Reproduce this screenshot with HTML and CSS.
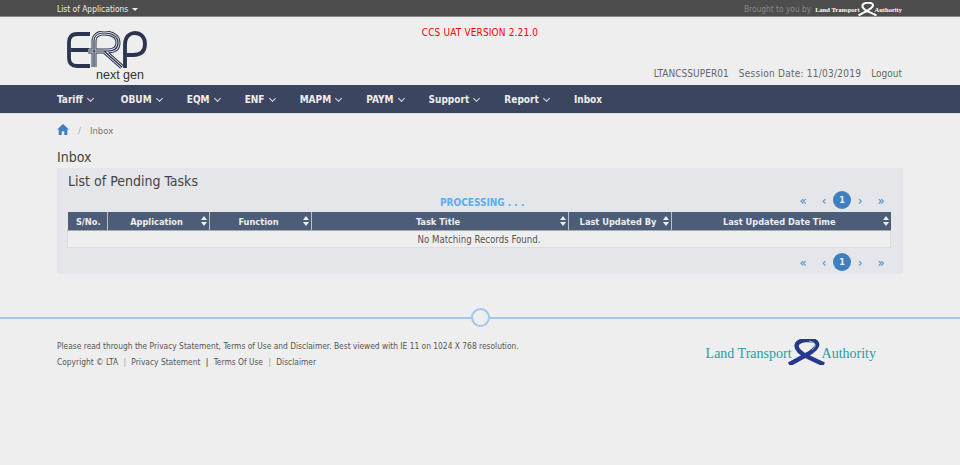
FILE: index.html
```html
<!DOCTYPE html>
<html lang="en">
<head>
    <meta charset="UTF-8">
    <meta name="viewport" content="width=device-width, initial-scale=1.0">
    <title>Inbox</title>
    <link rel="stylesheet" href="styles.css">
</head>
<body>

    <div class="topbar">
        <div class="container topbar-row">
            <a class="app-list">List of Applications <span class="caret"></span></a>
            <div class="brought">
                <span>Brought to you by</span>
                <span class="lta-small">Land Transport</span>
                <svg class="ribbon-small" viewBox="0 0 37 26"><path d="M1 25.5 L20 15 C28 10 31 6 28 3 C25 0 12 0 9 5 C7 10 14 15 20 18 L36 25.5" fill="none" stroke="#fff" stroke-width="4"/></svg>
                <span class="lta-small">Authority</span>
            </div>
        </div>
    </div>

    <header>
        <div class="container header-row">
            <div class="logo">
                <svg viewBox="0 0 80 38" class="logo-mark">
                    <!-- E -->
                    <path d="M23 3 H10 C4 3 2 7 2 11 V27 C2 33 5 35 10 35 H23 M4 19 H22" fill="none" stroke="#2b3550" stroke-width="3.8"/>
                    <!-- R, drawn as a road -->
                    <g fill="none">
                        <path d="M27 36 V10 C27 5 31 2 37 2 C46 2 51 6 51 12 C51 18 46 20 40 20 H21 M37 20 L55 36" stroke="#2b3550" stroke-width="5"/>
                        <path d="M27 36 V10 C27 5 31 2 37 2 C46 2 51 6 51 12 C51 18 46 20 40 20 H21 M37 20 L55 36" stroke="#e8e8e8" stroke-width="3"/>
                        <path d="M27 36 V10 C27 5 31 2 37 2 C46 2 51 6 51 12 C51 18 46 20 40 20 H21 M37 20 L55 36" stroke="#2b3550" stroke-width="1.2"/>
                    </g>
                    <!-- P -->
                    <path d="M58 37 V14 C58 7 61 3 67 2 C74 2 78 6 78 13 C78 20 74 24 66 24 H60" fill="none" stroke="#2b3550" stroke-width="3.8"/>
                </svg>
                <div class="next-gen">next gen</div>
            </div>
            <div class="uat">CCS UAT VERSION 2.21.0</div>
            <div class="session">
                <span class="session-user">LTANCSSUPER01</span>
                <span class="session-date">Session Date: 11/03/2019</span>
                <a>Logout</a>
            </div>
        </div>
    </header>

    <nav>
        <ul class="container">
            <li>Tariff <span class="chev"></span></li>
            <li>OBUM <span class="chev"></span></li>
            <li>EQM <span class="chev"></span></li>
            <li>ENF <span class="chev"></span></li>
            <li>MAPM <span class="chev"></span></li>
            <li>PAYM <span class="chev"></span></li>
            <li>Support <span class="chev"></span></li>
            <li>Report <span class="chev"></span></li>
            <li>Inbox</li>
        </ul>
    </nav>

    <div class="container">
        <div class="crumbs">
            <svg class="home" viewBox="0 0 12 11"><path d="M6 0 L12 5.6 H10.3 V11 H7.3 V7.2 H4.7 V11 H1.7 V5.6 H0 Z" fill="#3f7fbf"/></svg>
            <span class="sep">/</span>
            <span>Inbox</span>
        </div>
        <h2 class="page-title">Inbox</h2>

        <div class="panel">
            <h3 class="panel-title">List of Pending Tasks</h3>
            <div class="tools">
                <div class="processing">PROCESSING . . .</div>
                <div class="pager">
                    <span>&laquo;</span><span>&lsaquo;</span><b>1</b><span>&rsaquo;</span><span>&raquo;</span>
                </div>
            </div>
            <table>
                <colgroup>
                    <col class="c1"><col class="c2"><col class="c2"><col class="c3"><col class="c4"><col>
                </colgroup>
                <thead>
                    <tr>
                        <th>S/No.</th>
                        <th class="sort">Application</th>
                        <th class="sort">Function</th>
                        <th class="sort">Task Title</th>
                        <th class="sort">Last Updated By</th>
                        <th class="sort">Last Updated Date Time</th>
                    </tr>
                </thead>
                <tbody>
                    <tr><td colspan="6">No Matching Records Found.</td></tr>
                </tbody>
            </table>
            <div class="pager pager-bottom">
                <span>&laquo;</span><span>&lsaquo;</span><b>1</b><span>&rsaquo;</span><span>&raquo;</span>
            </div>
        </div>
    </div>

    <footer>
        <div class="rule"><span class="rule-dot"></span></div>
        <div class="container footer-row">
            <div class="foot-text">
                <p>Please read through the Privacy Statement, Terms of Use and Disclaimer. Best viewed with IE 11 on 1024 X 768 resolution.</p>
                <p class="foot-links">Copyright &copy; LTA <i>|</i> Privacy Statement <i class="dark">|</i> Terms Of Use <i>|</i> Disclaimer</p>
            </div>
            <div class="lta">
                <span>Land Transport</span>
                <svg class="ribbon" viewBox="0 0 37 26">
                    <path d="M1 25.5 L20 15 C28 10 31 6 28 3 C25 0 12 0 9 5 C7 10 14 15 20 18 L36 25.5" fill="none" stroke="#26388c" stroke-width="4.4"/>
                    <path d="M24 11 C29 7 28 3 21 2" fill="none" stroke="#eee" stroke-width="0.6"/>
                </svg>
                <span>Authority</span>
            </div>
        </div>
    </footer>

</body>
</html>
```

FILE: styles.css
```css
body {
    margin: 0;
    background-color: #eeeeee;
    color: #555;
    font-family: "DejaVu Sans Condensed", "DejaVu Sans", sans-serif;
    font-size: 9px;
}

.container {
    width: 846px;
    margin: 0 auto;
}

/* top strip */
.topbar {
    height: 16px;
    background-color: #4d4d4d;
    border-bottom: 1px solid #888;
}

.topbar-row {
    display: flex;
    justify-content: space-between;
    align-items: center;
    height: 18px;
}

.app-list {
    color: #eee;
    font-size: 8.4px;
}

.caret {
    display: inline-block;
    border: 3px solid transparent;
    border-top-color: #eee;
    border-bottom: 0;
    vertical-align: middle;
    margin-left: 1px;
}

.brought {
    display: flex;
    align-items: center;
    color: #888;
    font-size: 8.3px;
    margin-right: 1px;
}

.lta-small {
    color: #fff;
    font-family: "Liberation Serif", serif;
    font-size: 6.5px;
    font-weight: bold;
}

.brought span:first-child {
    margin-right: 4px;
}

.ribbon-small {
    width: 19px;
    height: 14px;
    margin: 0 -2px 0 -2px;
}

/* header */
header {
    height: 68px;
}

.header-row {
    display: grid;
    grid-template-columns: 1fr auto 1fr;
}

.logo {
    padding: 14px 0 0 10px;
}

.logo-mark {
    display: block;
    width: 80px;
    height: 38px;
}

.next-gen {
    font-family: "Liberation Sans", sans-serif;
    font-size: 12.5px;
    line-height: 12px;
    color: #333;
    margin-left: 29px;
}

.uat {
    color: #f00;
    font-size: 10px;
    letter-spacing: 0.15px;
    padding-top: 10px;
}

.session {
    display: flex;
    justify-content: flex-end;
    gap: 10px;
    align-items: flex-end;
    height: 62px;
    margin-right: 1px;
    font-size: 10px;
    color: #666;
}

.session-user {
    letter-spacing: 0.05px;
}

.session-date {
    letter-spacing: 0.25px;
}

/* nav */
nav {
    height: 28px;
    background-color: #3b4560;
    border-bottom: 1px solid #ddd;
}

nav ul {
    display: flex;
    list-style-type: none;
    padding: 0;
    height: 28px;
    align-items: center;
    gap: 25px;
}

nav li {
    color: #eee;
    font-size: 10px;
    font-weight: bold;
    white-space: nowrap;
}

nav li:first-child {
    margin-right: 3px;
}

.chev {
    display: inline-block;
    width: 4px;
    height: 4px;
    border-right: 1px solid #ddd;
    border-bottom: 1px solid #ddd;
    transform: rotate(45deg);
    margin: 0 0 2px 2px;
}

/* breadcrumb */
.crumbs {
    display: flex;
    align-items: center;
    height: 12px;
    margin-top: 9px;
    padding-top: 1px;
    font-size: 9.5px;
    color: #777;
}

.home {
    width: 12px;
    height: 11px;
    margin-bottom: 2px;
}

.sep {
    margin: 0 9px;
    color: #aaa;
}

.page-title {
    margin: 14px 0 3px;
    font-size: 14px;
    font-weight: normal;
    line-height: 15px;
    color: #444;
}

.panel {
    background-color: #e4e6ea;
    padding: 5px 10px 3px 10px;
    height: 98px;
}

.panel-title {
    margin: 0;
    padding-left: 1px;
    font-size: 14px;
    font-weight: normal;
    line-height: 16px;
    color: #444;
}

.tools {
    display: flex;
    position: relative;
    justify-content: flex-end;
    align-items: flex-end;
    height: 23px;
}

.processing {
    position: absolute;
    left: 373px;
    top: 8px;
    font-size: 10px;
    font-weight: bold;
    color: #5aaef0;
}

.pager {
    display: flex;
    align-items: center;
    justify-content: flex-end;
    height: 18px;
    margin-bottom: 3px;
    color: #4a86c0;
    font-size: 13px;
}

.pager span {
    width: 18px;
    text-align: center;
}

.pager span:first-child,
.pager span:last-child {
    width: 24px;
}

.pager b {
    width: 18px;
    height: 18px;
    line-height: 18px;
    border-radius: 50%;
    background-color: #3f7fbf;
    color: #eee;
    font-size: 9px;
    text-align: center;
}

.pager-bottom {
    margin-top: 5px;
}

table {
    width: 824px;
    border-collapse: collapse;
    table-layout: fixed;
}

.c1 { width: 40px; }
.c2 { width: 102px; }
.c3 { width: 257px; }
.c4 { width: 103px; }

th {
    height: 18px;
    padding: 0;
    background-color: #4d5d78;
    border-right: 1px solid #b8c0cc;
    border-bottom: 1px solid #aaa;
    color: #eee;
    font-size: 9.2px;
    font-weight: bold;
    text-align: center;
    position: relative;
}

th:first-child {
    padding-left: 2px;
}

th:last-child {
    border-right: 0;
}

/* sort arrows */
.sort {
    padding-right: 4px;
}

.sort::before,
.sort::after {
    content: "";
    position: absolute;
    right: 2px;
    border: 3px solid transparent;
}

.sort::before {
    top: 4px;
    border-top: 0;
    border-bottom: 4px solid #eee;
}

.sort::after {
    bottom: 4px;
    border-bottom: 0;
    border-top: 4px solid #eee;
}

td {
    height: 16px;
    padding: 0;
    text-align: center;
    background-color: #eeeeee;
    border: 1px solid #ddd;
    border-top: 0;
    font-size: 9.6px;
    color: #555;
}

/* footer */
footer {
    margin-top: 43px;
}

.rule {
    position: relative;
    height: 2px;
    background-color: #a4c6ea;
}

.rule-dot {
    position: absolute;
    left: 471px;
    top: -9px;
    width: 15px;
    height: 15px;
    border: 2px solid #a4c6ea;
    border-radius: 50%;
    background-color: #eeeeee;
}

.footer-row {
    display: flex;
    justify-content: space-between;
}

.foot-text p {
    margin: 0;
    font-size: 8.35px;
    line-height: 16px;
}

.foot-text {
    padding-top: 18.5px;
}

.foot-links i {
    font-style: normal;
    margin: 0 3px;
    color: #999;
}

.foot-links i.dark {
    color: #222;
}

.lta {
    display: flex;
    align-items: center;
    height: 26px;
    padding: 20px 27px 0 0;
    color: #2a9aa5;
    font-family: "Liberation Serif", serif;
    font-size: 14px;
}

.lta span {
    padding-top: 3px;
}

.ribbon {
    width: 37px;
    height: 26px;
    margin: 0 -3px 0 -4px;
}
```
